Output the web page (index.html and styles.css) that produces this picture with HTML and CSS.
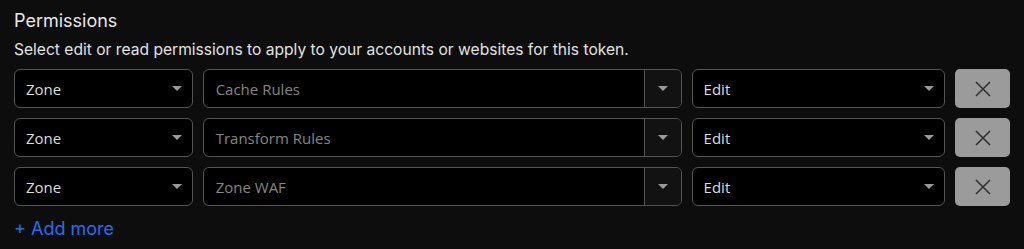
FILE: index.html
```html
<!DOCTYPE html>
<html lang="en">
<head>
    <meta charset="UTF-8">
    <meta name="viewport" content="width=device-width, initial-scale=1.0">
    <title>Permissions</title>
    <link rel="stylesheet" href="styles.css">
</head>
<body>
    <div class="permissions">
        <div class="section-title">Permissions</div>
        <div class="section-desc">Select edit or read permissions to apply to your accounts or websites for this token.</div>

        <div class="perm-rows">
            <div class="perm-row">
                <div class="select select-scope"><span>Zone</span><i class="caret"></i></div>
                <div class="combo">
                    <span class="combo-text">Cache Rules</span>
                    <span class="combo-arrow"><i class="caret"></i></span>
                </div>
                <div class="select select-level"><span>Edit</span><i class="caret"></i></div>
                <button class="remove-btn" aria-label="Remove">
                    <svg width="16" height="16" viewBox="0 0 16 16"><path d="M1 1L15 15M15 1L1 15" stroke="#2e2e2e" stroke-width="1.5" fill="none"/></svg>
                </button>
            </div>
            <div class="perm-row">
                <div class="select select-scope"><span>Zone</span><i class="caret"></i></div>
                <div class="combo">
                    <span class="combo-text">Transform Rules</span>
                    <span class="combo-arrow"><i class="caret"></i></span>
                </div>
                <div class="select select-level"><span>Edit</span><i class="caret"></i></div>
                <button class="remove-btn" aria-label="Remove">
                    <svg width="16" height="16" viewBox="0 0 16 16"><path d="M1 1L15 15M15 1L1 15" stroke="#2e2e2e" stroke-width="1.5" fill="none"/></svg>
                </button>
            </div>
            <div class="perm-row">
                <div class="select select-scope"><span>Zone</span><i class="caret"></i></div>
                <div class="combo">
                    <span class="combo-text">Zone WAF</span>
                    <span class="combo-arrow"><i class="caret"></i></span>
                </div>
                <div class="select select-level"><span>Edit</span><i class="caret"></i></div>
                <button class="remove-btn" aria-label="Remove">
                    <svg width="16" height="16" viewBox="0 0 16 16"><path d="M1 1L15 15M15 1L1 15" stroke="#2e2e2e" stroke-width="1.5" fill="none"/></svg>
                </button>
            </div>
        </div>

        <a class="add-more" href="#">+ Add more</a>
    </div>
</body>
</html>
```

FILE: styles.css
```css
body {
    margin: 0;
    padding: 0;
    background-color: #0d0d0d;
    color: #e6e6e6;
    font-family: 'Inter', 'Liberation Sans', sans-serif;
}

.permissions {
    padding: 9px 14px 0;
}

.section-title {
    font-size: 18px;
    line-height: 24px;
    color: #e8e8e8;
}

.section-desc {
    margin-top: 7px;
    font-size: 15.6px;
    line-height: 20px;
    color: #e2e2e2;
}

.perm-rows {
    margin-top: 9px;
    display: flex;
    flex-direction: column;
    gap: 10px;
}

.perm-row {
    display: flex;
    gap: 10px;
    height: 39px;
}

.select {
    box-sizing: border-box;
    height: 39px;
    background-color: #000;
    border: 1px solid #555;
    border-radius: 6px;
    display: flex;
    align-items: center;
    justify-content: space-between;
    padding: 0 10px 0 11px;
    font-family: 'Open Sans', 'Liberation Sans', sans-serif;
    font-size: 15px;
    color: #dcdcdc;
}

.select-scope {
    width: 179px;
}

.select-level {
    width: 254px;
}

.caret {
    display: block;
    width: 0;
    height: 0;
    border-left: 5px solid transparent;
    border-right: 5px solid transparent;
    border-top: 5px solid #9a9a9a;
}

.combo {
    box-sizing: border-box;
    width: 480px;
    height: 39px;
    background-color: #000;
    border: 1px solid #555;
    border-radius: 6px;
    display: flex;
    overflow: hidden;
}

.combo-text {
    flex: 1;
    display: flex;
    align-items: center;
    padding-left: 12px;
    font-family: 'Open Sans', 'Liberation Sans', sans-serif;
    font-size: 15px;
    color: #858585;
}

.combo-arrow {
    width: 36px;
    border-left: 1px solid #555;
    background-color: #121212;
    display: flex;
    align-items: center;
    justify-content: center;
}

.remove-btn {
    width: 55px;
    height: 39px;
    border: none;
    border-radius: 5px;
    background-color: #9b9b9b;
    display: flex;
    align-items: center;
    justify-content: center;
    padding: 0;
    cursor: pointer;
}

.add-more {
    display: inline-block;
    margin-top: 11px;
    font-size: 18px;
    line-height: 24px;
    color: #1f6ff2;
    text-decoration: none;
}
```
